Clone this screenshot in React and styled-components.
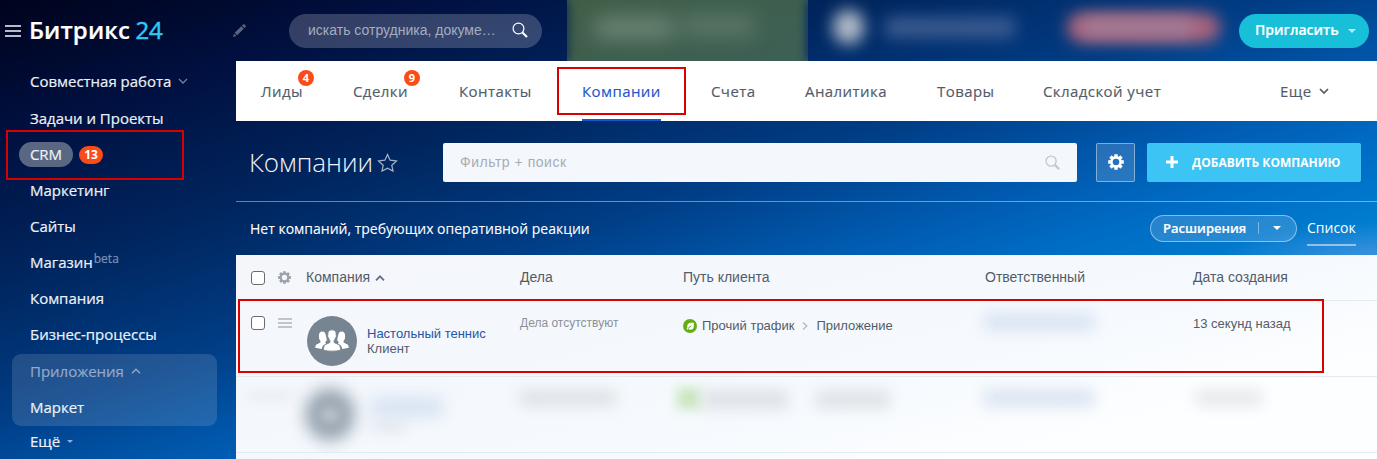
import React from "react";
import styled, { createGlobalStyle } from "styled-components";

const Global = createGlobalStyle`
  * { box-sizing: border-box; }
  body { margin: 0; font-family: "Open Sans", "Noto Sans", sans-serif; overflow: hidden; }
  svg { display: block; flex: none; }
`;

const Page = styled.div`
  position: relative;
  width: 1377px;
  height: 459px;
  overflow: hidden;
  display: flex;
  flex-direction: column;
  background:
    radial-gradient(ellipse 170px 36px at 1390px 258px, rgba(120, 160, 230, 0.55), rgba(120, 160, 230, 0)),
    linear-gradient(162deg, #00031c 0px, #001040 130px, #00265f 270px, #003d85 395px, #0059ae 490px, #006cc4 560px, #0080d2 650px, #0a90de 860px);
`;

const Header = styled.header`
  height: 61px;
  flex: none;
  display: flex;
  align-items: center;
  padding: 0 8px 0 5px;
`;
const Logo = styled.div`
  width: 204px;
  margin: -2px 0 0 8px;
  font-size: 24px;
  line-height: 30px;
  font-weight: 600;
  letter-spacing: 0.1px;
  color: #fff;
  white-space: nowrap;
  -webkit-text-stroke: 0.2px;
  span {
    color: #2fc6f6;
    font-weight: 400;
    letter-spacing: 0;
    margin-left: -1px;
    -webkit-text-stroke: 0.5px;
  }
`;
const Search = styled.div`
  margin-left: 43px;
  width: 253px;
  height: 34px;
  border-radius: 17px;
  background: rgba(255, 255, 255, 0.2);
  display: flex;
  align-items: center;
  justify-content: space-between;
  padding: 0 14px 2px 19px;
  font: 14px "Liberation Sans", Arial, sans-serif;
  letter-spacing: 0;
  color: #a5adc0;
`;
const Timer = styled.div`
  position: relative;
  width: 241px;
  height: 61px;
  margin-left: 25px;
  overflow: hidden;
  background: linear-gradient(160deg, #405e47, #3d6056);
`;
const Profile = styled.div`
  position: relative;
  width: 431px;
  height: 61px;
  overflow: hidden;
`;
const Haze = styled.div`
  position: absolute;
  left: ${(p) => p.$x}px;
  top: ${(p) => p.$y}px;
  width: ${(p) => p.$w}px;
  height: ${(p) => p.$h}px;
  border-radius: ${(p) => p.$r || 2}px;
  background: ${(p) => p.$c};
  filter: blur(${(p) => p.$b || 6}px);
`;
const Invite = styled.button`
  width: 130px;
  height: 34px;
  border: 0;
  border-radius: 17px;
  background: #17bfd8;
  color: #fff;
  font: 600 14px "Open Sans", sans-serif;
  padding: 0 13px 2px 16px;
  display: flex;
  align-items: center;
  justify-content: space-between;
  -webkit-text-stroke: 0.2px;
  svg { margin-top: 2px; }
`;

const Body = styled.div`
  flex: 1;
  min-height: 0;
  display: flex;
`;
const Sidebar = styled.nav`
  width: 236px;
  flex: none;
  padding: 2px 19px 0 12px;
`;
const MenuItem = styled.div`
  height: 36px;
  display: flex;
  align-items: center;
  padding-left: ${(p) => (p.$pill ? 7 : 18)}px;
  margin-bottom: ${(p) => p.$gap || 0}px;
  font-size: 15px;
  letter-spacing: -0.02px;
  line-height: 20px;
  color: ${(p) => (p.$dim ? "#94a9c8" : "#edf1f7")};
  -webkit-text-stroke: 0.2px;
  svg { margin-left: 7px; }
  sup {
    font-size: 12px;
    line-height: 12px;
    letter-spacing: 0;
    align-self: flex-start;
    margin: 9px 0 0 1px;
    color: #7c93b8;
  }
`;
const Pill = styled.span`
  width: 54px;
  height: 25px;
  border-radius: 13px;
  background: #596782;
  text-align: center;
  line-height: 24px;
`;
const Count = styled.span`
  width: 24px;
  height: 18px;
  margin: 1px 0 0 6px;
  border-radius: 9px;
  background: #fa4c19;
  color: #fff;
  font-size: 12px;
  font-weight: 700;
  line-height: 18px;
  text-align: center;
  -webkit-text-stroke: 0;
`;
const Group = styled.div`
  height: 72px;
  margin: 2px 0 -3px;
  border-radius: 9px;
  background: rgba(255, 255, 255, 0.13);
  display: flex;
  flex-direction: column;
  justify-content: flex-end;
  padding-bottom: 1px;
  ${MenuItem} { flex: none; }
`;

const Main = styled.main`
  flex: 1;
  min-width: 0;
  display: flex;
  flex-direction: column;
`;
const Tabs = styled.div`
  height: 60px;
  flex: none;
  background: #fff;
  display: flex;
  padding-left: 25px;
`;
const Tab = styled.div`
  position: relative;
  width: ${(p) => p.$w}px;
  margin-right: ${(p) => p.$gap}px;
  font-size: 15px;
  letter-spacing: 0.42px;
  line-height: 60px;
  white-space: nowrap;
  color: ${(p) => (p.$active ? "#1d56cf" : "#525c69")};
  box-shadow: ${(p) => (p.$active ? "inset 0 -2px #1058d0" : "none")};
  -webkit-text-stroke: 0.15px;
  display: flex;
  align-items: center;
  gap: 8px;
`;
const Badge = styled.span`
  position: absolute;
  right: ${(p) => p.$right}px;
  top: 9px;
  width: 16px;
  height: 16px;
  border-radius: 8px;
  background: #fa4c19;
  color: #fff;
  font-size: 11px;
  font-weight: 700;
  line-height: 16px;
  letter-spacing: 0;
  text-align: center;
  -webkit-text-stroke: 0;
`;
const TitleBar = styled.div`
  height: 81px;
  flex: none;
  border-bottom: 1px solid rgba(255, 255, 255, 0.42);
  display: flex;
  align-items: center;
  padding: 2px 16px 0 13px;
`;
const Title = styled.h1`
  margin: 0;
  width: 128px;
  font-size: 26px;
  line-height: 36px;
  font-weight: 300;
  color: #f0f3f8;
`;
const Filter = styled.div`
  width: 634px;
  height: 39px;
  margin-left: 45px;
  border-radius: 2px;
  background: #f4f7fc;
  display: flex;
  align-items: center;
  justify-content: space-between;
  padding: 0 17px;
  font: 14px "Liberation Sans", Arial, sans-serif;
  letter-spacing: 0.52px;
  color: #a8adb4;
`;
const IconButton = styled.div`
  width: 39px;
  height: 39px;
  margin-left: 19px;
  border: 1px solid rgba(255, 255, 255, 0.42);
  border-radius: 2px;
  background: rgba(255, 255, 255, 0.15);
  display: grid;
  place-items: center;
`;
const AddButton = styled.button`
  width: 214px;
  height: 39px;
  margin-left: 12px;
  border: 0;
  border-radius: 2px;
  background: #3bc4f4;
  color: #fff;
  font: 700 12px "Open Sans", sans-serif;
  white-space: nowrap;
  display: flex;
  align-items: center;
  gap: 14px;
  padding: 0 0 0 19px;
`;
const StatusBar = styled.div`
  height: 53px;
  flex: none;
  display: flex;
  align-items: center;
  padding: 0 21px 0 14px;
  color: #fff;
  font-size: 14px;
`;
const StatusText = styled.div`
  flex: 1;
  line-height: 20px;
  -webkit-text-stroke: 0.1px;
`;
const Extensions = styled.div`
  width: 147px;
  height: 27px;
  border: 1px solid rgba(255, 255, 255, 0.45);
  border-radius: 14px;
  background: rgba(255, 255, 255, 0.15);
  display: flex;
  align-items: center;
  padding: 0 15px 1px 12px;
  font-size: 13px;
  font-weight: 600;
  -webkit-text-stroke: 0.2px;
`;
const Split = styled.span`
  width: 1px;
  height: 12px;
  background: rgba(255, 255, 255, 0.4);
  margin: 0 14px 0 auto;
`;
const ListLink = styled.div`
  width: 49px;
  height: 31px;
  margin: 3px 0 0 10px;
  line-height: 25px;
  border-bottom: 2px solid rgba(255, 255, 255, 0.5);
  white-space: nowrap;
`;

const Table = styled.section`
  flex: 1;
  background: linear-gradient(165deg, #f5f6fa 0px, #f4f8fd 150px, #f6fafe 290px, #fdfeff 400px);
  font-family: "Liberation Sans", Arial, sans-serif;
  color: #525c69;
`;
const Row = styled.div`
  position: relative;
  height: ${(p) => p.$h}px;
  border-bottom: 1px solid #e3eaf0;
  display: grid;
  grid-template-columns: 27px 28px 214px 163px 302px 208px 1fr;
  padding-left: 15px;
  align-items: ${(p) => (p.$head ? "center" : "start")};
  overflow: hidden;
  font-size: ${(p) => (p.$head ? 14 : 13)}px;
`;
const Cell = styled.div`
  display: flex;
  align-items: center;
  gap: ${(p) => p.$gap || 0}px;
  line-height: 15px;
  padding-top: ${(p) => p.$top || 0}px;
  white-space: nowrap;
`;
const Check = styled.span`
  width: 14px;
  height: 14px;
  border: 1px solid #686c72;
  border-radius: 3px;
  background: #fff;
`;
const Muted = styled.span`
  font-size: 12px;
  color: #8b9098;
`;
const CompanyCell = styled(Cell)`
  align-items: flex-start;
  padding: 15px 0 0 1px;
`;
const Company = styled.div`
  padding: 10px 0 0 10px;
  a { display: block; color: #2455a4; }
`;
const Mark = styled.div`
  position: absolute;
  left: ${(p) => p.$x}px;
  top: ${(p) => p.$y}px;
  width: ${(p) => p.$w}px;
  height: ${(p) => p.$h}px;
  border: 2px solid #d90000;
  pointer-events: none;
`;

const Chevron = ({ up, size = 10, color, w = 1.5 }) => (
  <svg width={size} height={size} viewBox="0 0 10 10" fill="none" stroke={color} strokeWidth={w}>
    <path d={up ? "M1 7.3l4-4 4 4" : "M1 3l4 4 4-4"} />
  </svg>
);
const Caret = ({ w = 8, color }) => (
  <svg width={w} height={w / 2} viewBox="0 0 8 4"><path d="M0 0h8L4 4z" fill={color} /></svg>
);
const Lens = ({ size, color, w }) => (
  <svg width={size} height={size} viewBox="0 0 16 16" fill="none" stroke={color}>
    <circle cx="6.5" cy="6.5" r="5.4" strokeWidth={w} />
    <path d="M10.4 10.4l4.6 4.6" strokeWidth={w * 1.8} />
  </svg>
);
const Bars = ({ w, h, color, t = 2, gap }) => (
  <svg width={w} height={h}>
    {[0, 1, 2].map((i) => <rect key={i} y={i * gap} width={w} height={t} fill={color} />)}
  </svg>
);
const Gear = ({ size, color }) => (
  <svg width={size} height={size} viewBox="-8 -8 16 16">
    {[0, 45, 90, 135].map((a) => (
      <path key={a} d="M-1.7-7.8h3.4v3.4h-3.4zM-1.7 4.4h3.4v3.4h-3.4z" transform={`rotate(${a})`} fill={color} />
    ))}
    <circle r="4.6" fill="none" stroke={color} strokeWidth="2.6" />
  </svg>
);
const People = () => (
  <svg width="50" height="50" viewBox="0 0 50 50">
    <circle cx="25" cy="25" r="25" fill="#768591" />
    <g fill="#fff">
      <path d="M15.4 15.5c-2.5 0-3.5 1.8-3.5 4.3 0 2.8.5 4 1.5 5v1.8L9 28.7c-.5 1-.7 2-.8 3.100l6.500 1.100c.4-2 1.200-3.600 2.700-4.400l1.700-.8-1-1.400c1-1 2-1.500 1.600-3l-.9-4c-.3-2.500-1.300-3.800-3.400-3.800z" />
      <path d="M34.600 15.5c2.500 0 3.500 1.800 3.500 4.300 0 2.800-.5 4-1.500 5v1.800l4.400 2.100c.5 1 .7 2 .8 3.100l-6.500 1.100c-.4-2-1.200-3.600-2.700-4.400l-1.700-.8 1-1.400c-1-1-2-1.500-1.600-3l.9-4c.3-2.500 1.300-3.800 3.400-3.800z" />
      <path d="M25 13.800c-3.300 0-4.500 2.200-4.100 5-.7 1 0 2.700.7 3.100.2 1.200.7 2 1.300 2.600v2l-4.500 2.100c-1.300.7-2 3-2 5.600 4.500 1.300 12.700 1.300 17.200 0 0-2.600-.7-4.900-2-5.600l-4.500-2.100v-2c.6-.6 1.100-1.400 1.300-2.600.7-.4 1.400-2.100.7-3.100.4-2.800-.8-5-4.100-5z" stroke="#768591" strokeWidth=".9" />
    </g>
  </svg>
);
const Leaf = () => (
  <svg width="14" height="14" viewBox="0 0 14 14">
    <circle cx="7" cy="7" r="7" fill="#64ad14" />
    <path d="M10.800 3.800v3.400c0 2.200-1.200 3.500-3.200 3.500-.8 0-1.500-.2-2-.6l-1 .7-1-1 .8-.8c-.8-3 1-5.200 3.500-5.200z" fill="#fff" />
    <path d="M5 9.500l3.300-2.700" stroke="#64ad14" />
  </svg>
);

export default function App() {
  return (
    <Page>
      <Global />
      <Header>
        <Bars w={16} h={12} gap={5} color="#b7bcca" />
        <Logo>Битрикс <span>24</span></Logo>
        <svg width="13" height="13" viewBox="0 0 13 13" fill="#58647f">
          <path d="M0 13l1-3.500 2.500 2.500zM1.700 8.800L8.300 2.200l2.500 2.500-6.600 6.600zM9 1.500L10.300.2h1L12.800 1.700v1L11.500 4z" />
        </svg>
        <Search>искать сотрудника, докуме…<Lens size={16} color="#fff" w={1.2} /></Search>
        <Timer>
          <Haze $x={-6} $y={0} $w={8} $h={61} $c="#12304c" $b={4} />
          <Haze $x={28} $y={17} $w={80} $h={22} $c="#6a8473" $b={10} />
          <Haze $x={114} $y={16} $w={74} $h={20} $c="#5c7867" $b={10} />
          <Haze $x={239} $y={0} $w={10} $h={61} $c="#052b60" $b={5} />
        </Timer>
        <Profile>
          <Haze $x={25} $y={10} $w={31} $h={34} $r={16} $c="#b3bcc8" $b={8} />
          <Haze $x={77} $y={17} $w={130} $h={21} $c="#3a5b90" $b={8} />
          <Haze $x={259} $y={13} $w={153} $h={29} $r={14} $c="#ad647a" $b={8} />
          <Haze $x={275} $y={18} $w={110} $h={18} $c="#a07c98" $b={8} />
        </Profile>
        <Invite>Пригласить <Caret color="#b9ebf3" /></Invite>
      </Header>
      <Body>
        <Sidebar>
          <MenuItem $gap={1}>Совместная работа <Chevron color="#7280a0" w={1.3} /></MenuItem>
          <MenuItem>Задачи и Проекты</MenuItem>
          <MenuItem $pill><Pill>CRM</Pill><Count>13</Count></MenuItem>
          <MenuItem>Маркетинг</MenuItem>
          <MenuItem>Сайты</MenuItem>
          <MenuItem>Магазин<sup>beta</sup></MenuItem>
          <MenuItem>Компания</MenuItem>
          <MenuItem>Бизнес-процессы</MenuItem>
          <Group>
            <MenuItem $dim>Приложения <Chevron up color="#94a9c8" w={1.4} /></MenuItem>
            <MenuItem>Маркет</MenuItem>
          </Group>
          <MenuItem>Ещё <Caret w={6} color="#8fb0d6" /></MenuItem>
        </Sidebar>
        <Main>
          <Tabs>
            <Tab $w={43} $gap={49}>Лиды<Badge $right={-10}>4</Badge></Tab>
            <Tab $w={56} $gap={50}>Сделки<Badge $right={-11}>9</Badge></Tab>
            <Tab $w={73} $gap={50}>Контакты</Tab>
            <Tab $w={79} $gap={50} $active>Компании</Tab>
            <Tab $w={44} $gap={50}>Счета</Tab>
            <Tab $w={83} $gap={49}>Аналитика</Tab>
            <Tab $w={57} $gap={49}>Товары</Tab>
            <Tab $w={118} $gap={119}>Складской учет</Tab>
            <Tab $w={60} $gap={0}>Еще<Chevron color="#525c69" w={1.7} /></Tab>
          </Tabs>
          <TitleBar>
            <Title>Компании</Title>
            <svg width="21" height="20" viewBox="0 0 21 20" fill="none" stroke="#a5b4cd" strokeWidth="1.2">
              <path d="M10.500 2.500l2.600 5.700 6.400.8-4.700 4.200 1.200 5.900-5.500-2.900L5 19.100l1.200-5.900L1.500 9l6.400-.8z" />
            </svg>
            <Filter>Фильтр + поиск<Lens size={15} color="#c3c8cf" w={1.400} /></Filter>
            <IconButton><Gear size={16} color="#fff" /></IconButton>
            <AddButton>
              <svg width="12" height="12"><path d="M4.500 0h3v4.500H12v3H7.500V12h-3V7.500H0v-3h4.500z" fill="#fff" /></svg>
              ДОБАВИТЬ КОМПАНИЮ
            </AddButton>
          </TitleBar>
          <StatusBar>
            <StatusText>Нет компаний, требующих оперативной реакции</StatusText>
            <Extensions>Расширения<Split /><Caret color="#fff" /></Extensions>
            <ListLink>Список</ListLink>
          </StatusBar>
          <Table>
            <Row $h={46} $head>
              <Cell><Check /></Cell>
              <Cell><Gear size={13} color="#9ba2ab" /></Cell>
              <Cell $gap={5}>Компания<Chevron up color="#66707c" w={1.800} /></Cell>
              <Cell>Дела</Cell>
              <Cell>Путь клиента</Cell>
              <Cell>Ответственный</Cell>
              <Cell>Дата создания</Cell>
            </Row>
            <Row $h={76}>
              <Cell $top={15}><Check /></Cell>
              <Cell $top={17}><Bars w={14} h={10} t={2} gap={4} color="#c0c5cc" /></Cell>
              <CompanyCell>
                <People />
                <Company><a>Настольный теннис</a>Клиент</Company>
              </CompanyCell>
              <Cell $top={15}><Muted>Дела отсутствуют</Muted></Cell>
              <Cell $top={17} $gap={5}>
                <Leaf />
                Прочий трафик
                <svg width="12" height="10" viewBox="0 0 12 10" fill="none" stroke="#b5bbc3" strokeWidth="1.400"><path d="M3 1.500L6.800 5 3 8.500" /></svg>
                Приложение
              </Cell>
              <Cell />
              <Cell $top={15}>13 секунд назад</Cell>
              <Haze $x={748} $y={12} $w={110} $h={18} $c="#d9e4f2" $b={7} />
            </Row>
            <Row $h={76}>
              <Haze $x={12} $y={14} $w={44} $h={10} $c="#e9edf2" $b={6} />
              <Haze $x={69} $y={11} $w={50} $h={53} $r={26} $c="#9aa6b2" $b={8} />
              <Haze $x={84} $y={30} $w={20} $h={16} $r={8} $c="#b8c1cb" $b={5} />
              <Haze $x={135} $y={20} $w={72} $h={20} $c="#d7e2f1" $b={8} />
              <Haze $x={136} $y={44} $w={34} $h={10} $c="#e0e4e9" $b={7} />
              <Haze $x={284} $y={13} $w={96} $h={16} $c="#dde2e6" $b={7} />
              <Haze $x={441} $y={11} $w={24} $h={21} $c="#c8e6bc" $b={6} />
              <Haze $x={466} $y={13} $w={86} $h={19} $c="#dee2e7" $b={7} />
              <Haze $x={580} $y={13} $w={74} $h={19} $c="#e0e3e7" $b={7} />
              <Haze $x={748} $y={12} $w={110} $h={18} $c="#dce5f2" $b={7} />
              <Haze $x={960} $y={13} $w={66} $h={16} $c="#e7e8eb" $b={7} />
            </Row>
          </Table>
        </Main>
      </Body>
      <Mark $x={6} $y={130} $w={178} $h={50} />
      <Mark $x={557} $y={67} $w={129} $h={48} />
      <Mark $x={238} $y={299} $w={1086} $h={74} />
    </Page>
  );
}
